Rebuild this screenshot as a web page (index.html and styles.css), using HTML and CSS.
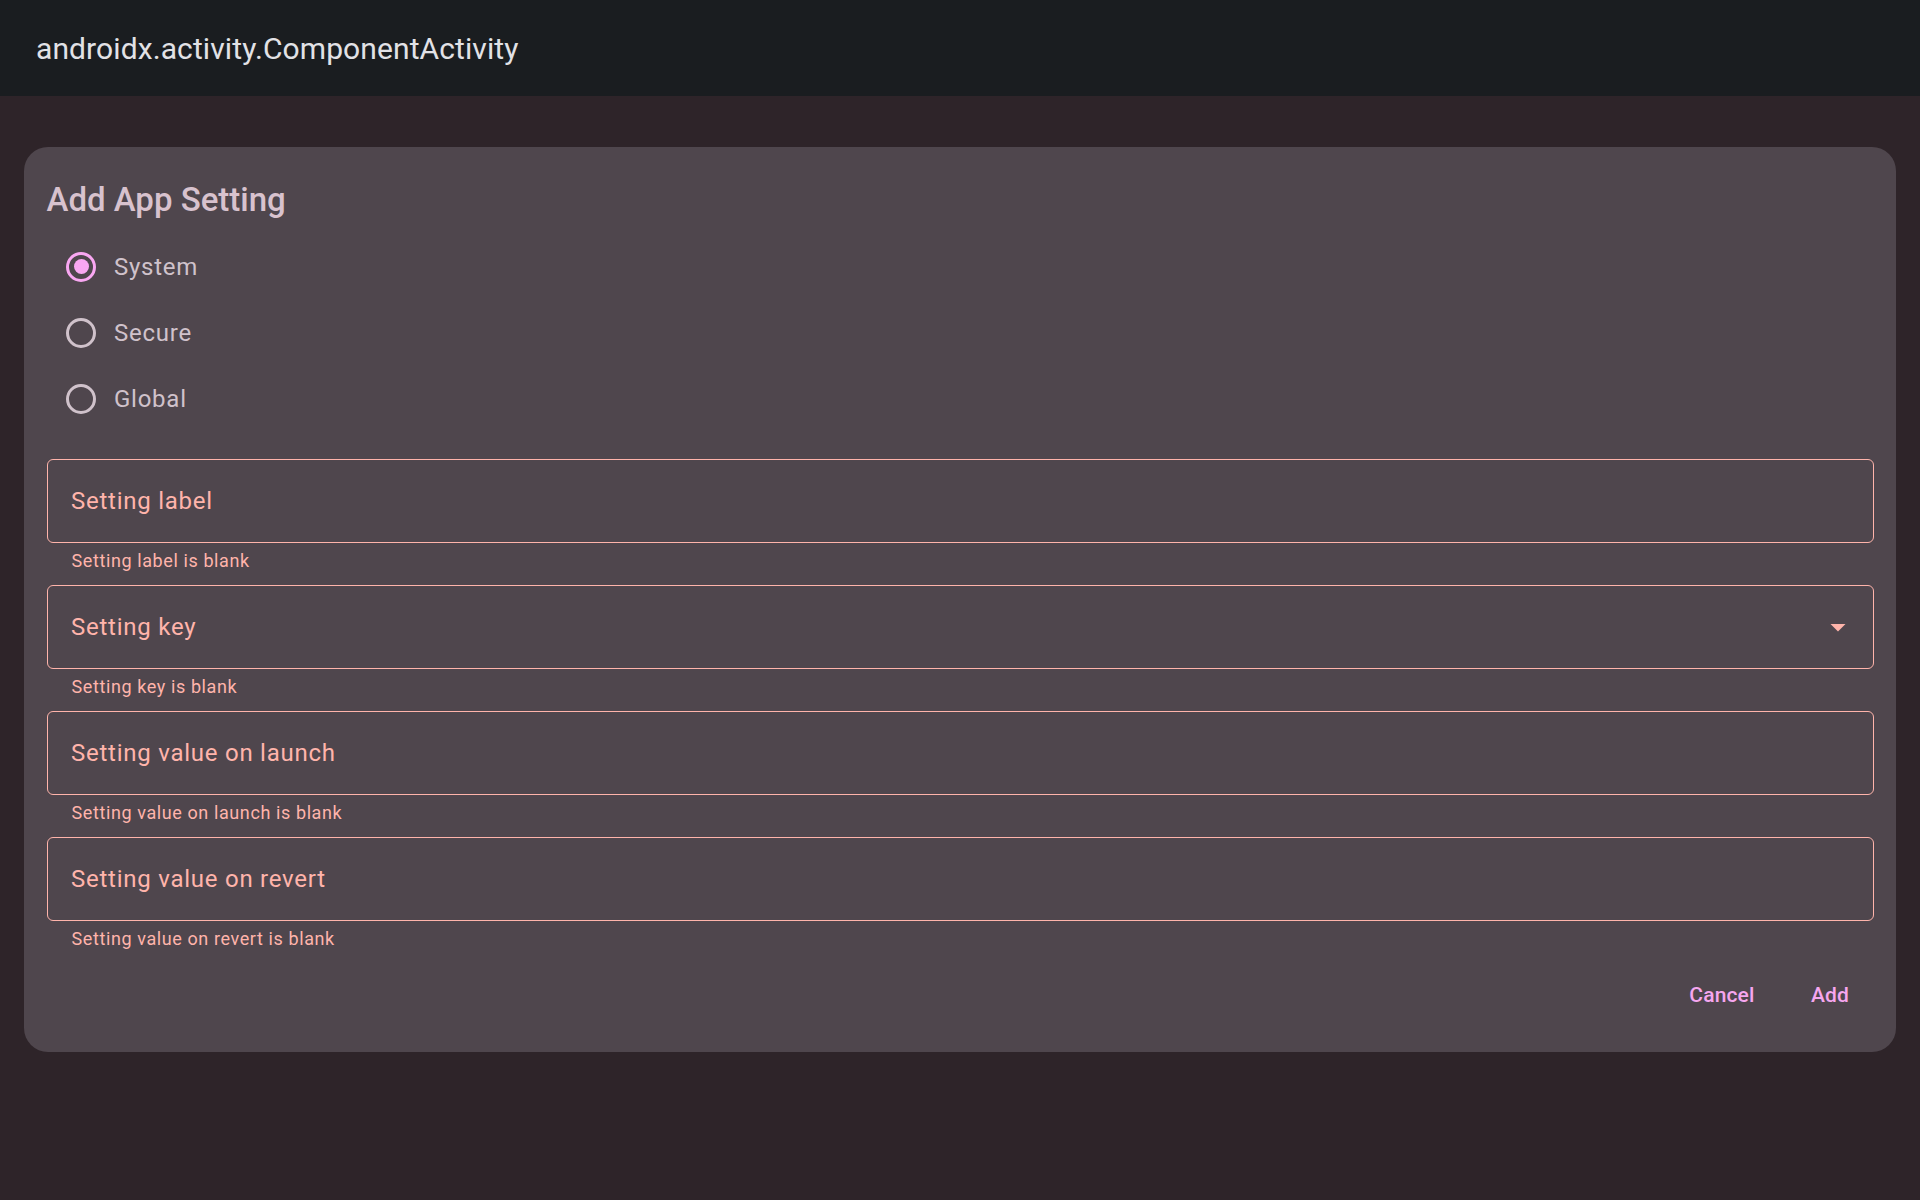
FILE: index.html
```html
<!DOCTYPE html>
<html lang="en">
<head>
<meta charset="utf-8">
<title>androidx.activity.ComponentActivity</title>
<link rel="stylesheet" href="styles.css">
</head>
<body>
<header class="topbar">androidx.activity.ComponentActivity</header>
<main class="page">
  <section class="card">
    <h1 class="title">Add App Setting</h1>
    <div class="radios">
      <div class="radio-row"><span class="radio selected"></span><span class="radio-label">System</span></div>
      <div class="radio-row"><span class="radio"></span><span class="radio-label">Secure</span></div>
      <div class="radio-row"><span class="radio"></span><span class="radio-label">Global</span></div>
    </div>
    <div class="fields">
      <div class="field-block">
        <div class="field"><span class="placeholder">Setting label</span></div>
        <div class="support">Setting label is blank</div>
      </div>
      <div class="field-block">
        <div class="field dropdown"><span class="placeholder">Setting key</span>
          <svg class="arrow" viewBox="0 0 24 24" width="36" height="36"><path d="M7 10l5 5 5-5z" fill="#ffb4ab"/></svg>
        </div>
        <div class="support">Setting key is blank</div>
      </div>
      <div class="field-block">
        <div class="field"><span class="placeholder">Setting value on launch</span></div>
        <div class="support">Setting value on launch is blank</div>
      </div>
      <div class="field-block">
        <div class="field"><span class="placeholder">Setting value on revert</span></div>
        <div class="support">Setting value on revert is blank</div>
      </div>
    </div>
    <div class="actions">
      <button class="text-btn">Cancel</button>
      <button class="text-btn">Add</button>
    </div>
  </section>
</main>
</body>
</html>
```

FILE: styles.css
```css
* { box-sizing: border-box; }
html, body {
  margin: 0;
  padding: 0;
}
body {
  background: #2e2429;
  font-family: Roboto, "Noto Sans", "Liberation Sans", sans-serif;
  height: 1200px;
  overflow: hidden;
}
.topbar {
  height: 96px;
  background: #1a1d20;
  color: #e2e2e6;
  font-size: 30px;
  font-weight: 400;
  letter-spacing: 0.1px;
  display: flex;
  align-items: center;
  padding-left: 36px;
}
.page {
  padding: 51px 24px 0;
}
.card {
  background: #4f464d;
  border-radius: 24px;
  padding: 22.5px 22.5px 21.5px;
}
.title {
  margin: 9px 0 0;
  font-size: 33px;
  line-height: 42px;
  font-weight: 500;
  color: #d8c2ce;
}
.radios {
  margin-top: 13px;
}
.radio-row {
  height: 66px;
  display: flex;
  align-items: center;
  padding-left: 19.5px;
}
.radio {
  width: 30px;
  height: 30px;
  border-radius: 50%;
  border: 3px solid #d0c2cb;
  display: flex;
  align-items: center;
  justify-content: center;
  flex: none;
}
.radio.selected {
  border-color: #f9a7f2;
}
.radio.selected::after {
  content: "";
  width: 15px;
  height: 15px;
  border-radius: 50%;
  background: #f9a7f2;
}
.radio-label {
  margin-left: 18px;
  font-size: 24px;
  letter-spacing: 0.75px;
  color: #d0c2cb;
}
.fields {
  margin-top: 27px;
  display: flex;
  flex-direction: column;
  gap: 12px;
}
.field {
  height: 84px;
  border: 1.5px solid #ffb4ab;
  border-radius: 6px;
  padding: 0 22.5px 0 23.5px;
  display: flex;
  align-items: center;
  justify-content: space-between;
}
.field.dropdown {
  padding-right: 17px;
}
.placeholder {
  font-size: 24px;
  letter-spacing: 0.75px;
  color: #ffb4ab;
}
.arrow {
  display: block;
  flex: none;
}
.support {
  padding: 6px 24px 0 25px;
  font-size: 18px;
  line-height: 24px;
  letter-spacing: 0.6px;
  color: #ffb4ab;
}
.actions {
  margin-top: 8px;
  height: 72px;
  display: flex;
  justify-content: flex-end;
  align-items: center;
  gap: 14px;
}
.text-btn {
  background: none;
  border: none;
  height: 60px;
  min-width: 87px;
  padding: 0 18px;
  font-family: Roboto, "Noto Sans", "Liberation Sans", sans-serif;
  font-size: 21px;
  font-weight: 500;
  letter-spacing: 0.15px;
  color: #f6a6ef;
  border-radius: 30px;
}
```
